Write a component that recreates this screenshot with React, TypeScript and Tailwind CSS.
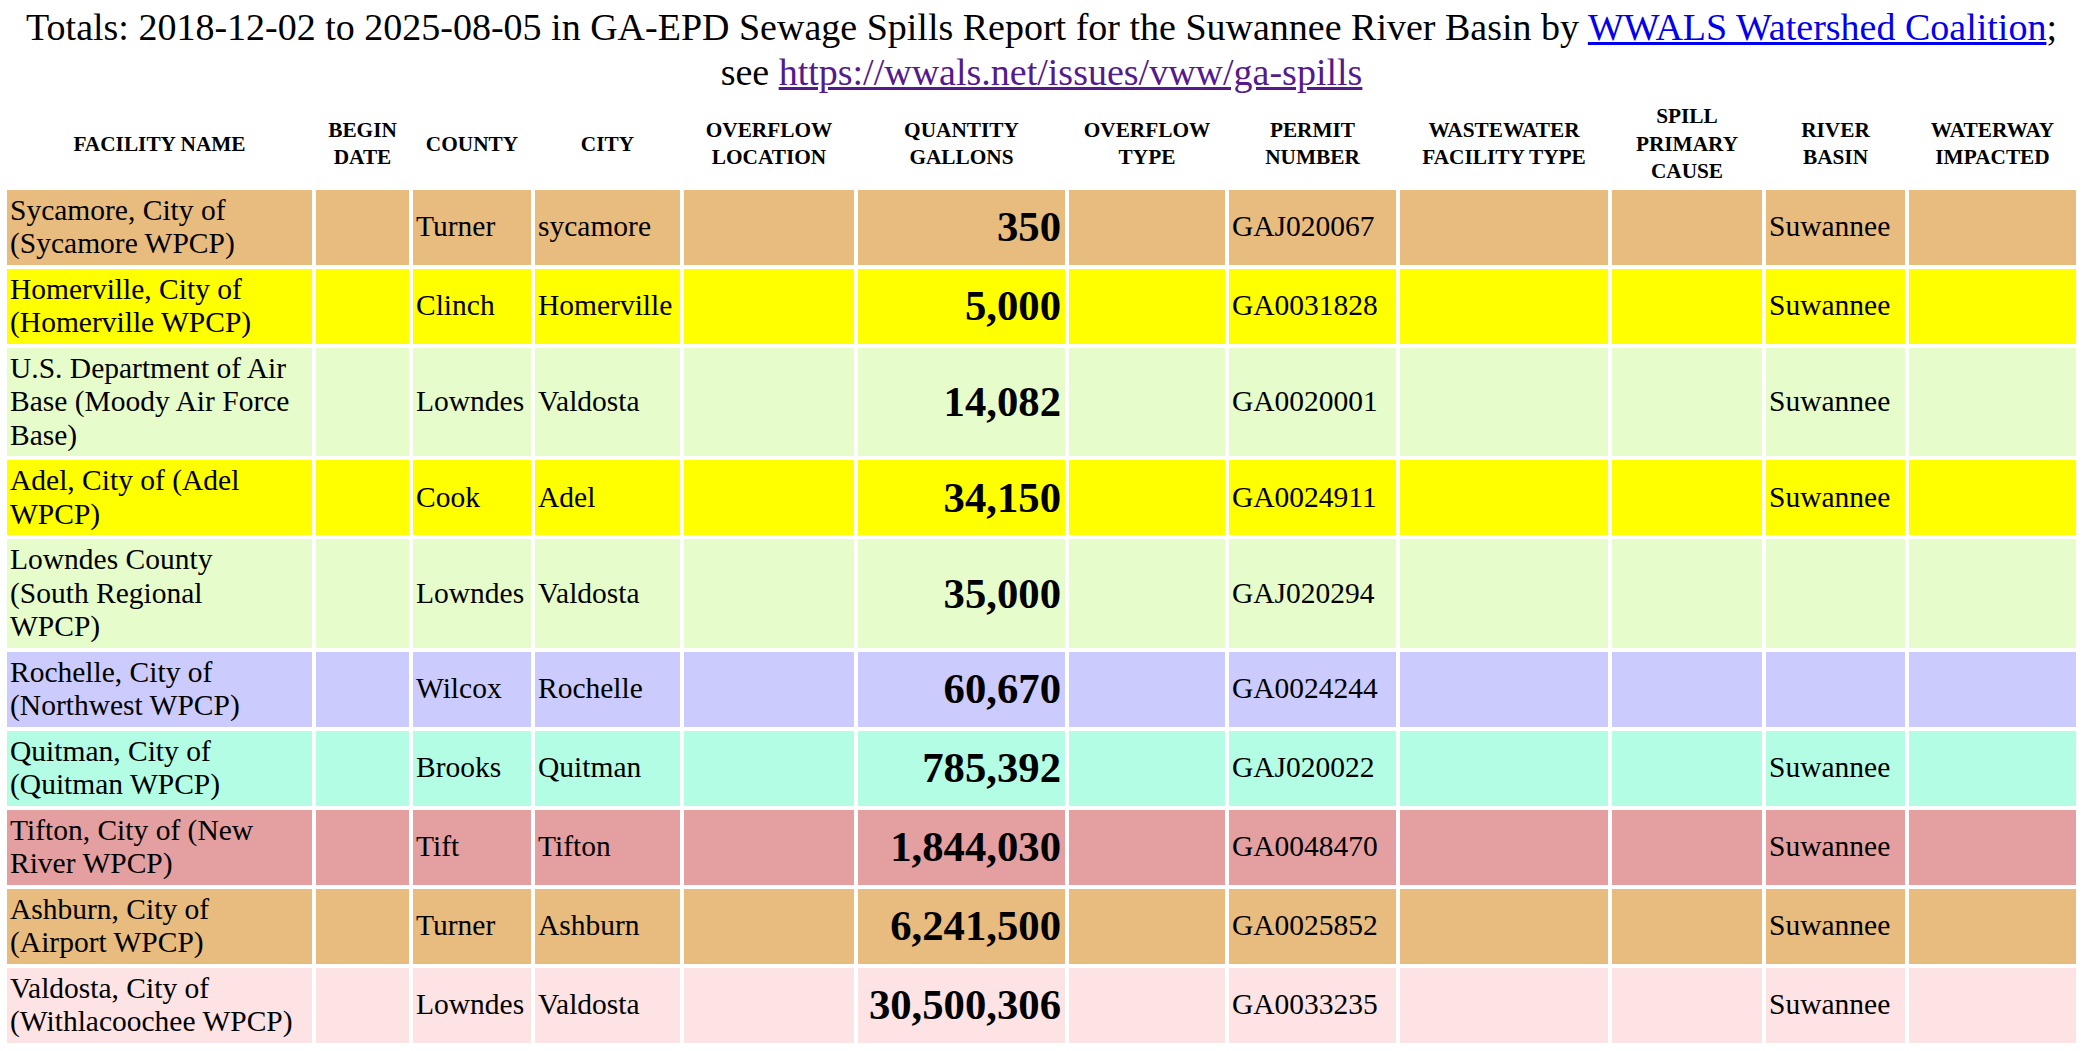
import React from "react";

const widths = [305, 93, 118, 145, 170, 207, 156, 167, 208, 150, 139, 167];
const heads = [
  ["FACILITY NAME"],
  ["BEGIN", "DATE"],
  ["COUNTY"],
  ["CITY"],
  ["OVERFLOW", "LOCATION"],
  ["QUANTITY", "GALLONS"],
  ["OVERFLOW", "TYPE"],
  ["PERMIT", "NUMBER"],
  ["WASTEWATER", "FACILITY TYPE"],
  ["SPILL", "PRIMARY", "CAUSE"],
  ["RIVER", "BASIN"],
  ["WATERWAY", "IMPACTED"],
];

type Row = { bg: string; name: React.ReactNode; county: string; city: string; q: string; permit: string; basin: string };
const rows: Row[] = [
  { bg: "bg-[#e8bb7e]", name: "Sycamore, City of (Sycamore WPCP)", county: "Turner", city: "sycamore", q: "350", permit: "GAJ020067", basin: "Suwannee" },
  { bg: "bg-[#ffff00]", name: "Homerville, City of (Homerville WPCP)", county: "Clinch", city: "Homerville", q: "5,000", permit: "GA0031828", basin: "Suwannee" },
  { bg: "bg-[#e6fdcb]", name: "U.S. Department of Air Base (Moody Air Force Base)", county: "Lowndes", city: "Valdosta", q: "14,082", permit: "GA0020001", basin: "Suwannee" },
  { bg: "bg-[#ffff00]", name: "Adel, City of (Adel WPCP)", county: "Cook", city: "Adel", q: "34,150", permit: "GA0024911", basin: "Suwannee" },
  { bg: "bg-[#e6fdcb]", name: <>Lowndes County<br />(South Regional<br />WPCP)</>, county: "Lowndes", city: "Valdosta", q: "35,000", permit: "GAJ020294", basin: "" },
  { bg: "bg-[#cccbfd]", name: "Rochelle, City of (Northwest WPCP)", county: "Wilcox", city: "Rochelle", q: "60,670", permit: "GA0024244", basin: "" },
  { bg: "bg-[#b2fde3]", name: "Quitman, City of (Quitman WPCP)", county: "Brooks", city: "Quitman", q: "785,392", permit: "GAJ020022", basin: "Suwannee" },
  { bg: "bg-[#e49fa1]", name: "Tifton, City of (New River WPCP)", county: "Tift", city: "Tifton", q: "1,844,030", permit: "GA0048470", basin: "Suwannee" },
  { bg: "bg-[#e8bb7e]", name: "Ashburn, City of (Airport WPCP)", county: "Turner", city: "Ashburn", q: "6,241,500", permit: "GA0025852", basin: "Suwannee" },
  { bg: "bg-[#fde3e3]", name: "Valdosta, City of (Withlacoochee WPCP)", county: "Lowndes", city: "Valdosta", q: "30,500,306", permit: "GA0033235", basin: "Suwannee" },
];

export default function App() {
  const td = "px-[3px] py-[4px] align-middle";
  return (
    <div className="bg-white text-black min-h-[1051px]" style={{ fontFamily: '"Liberation Serif", "Times New Roman", serif' }}>
      <div className="text-center text-[38px] leading-[45px] pt-[5px]">
        Totals: 2018-12-02 to 2025-08-05 in GA-EPD Sewage Spills Report for the Suwannee River Basin by{" "}
        <a href="#" className="text-[#0000ee] underline">WWALS Watershed Coalition</a>;<br />
        see <a href="#" className="text-[#551a8b] underline">https://wwals.net/issues/vww/ga-spills</a>
      </div>
      <table className="table-fixed border-separate border-spacing-[4px] ml-[3px] mt-[4px]" style={{ width: widths.reduce((a, b) => a + b, 0) + 4 * 13 }}>
        <colgroup>
          {widths.map((w, i) => (
            <col key={i} style={{ width: w }} />
          ))}
        </colgroup>
        <thead>
          <tr>
            {heads.map((h, i) => (
              <th key={i} className="text-[21.3px] leading-[27.5px] font-bold text-center align-middle px-0 py-0">
                {h.map((l, j) => (
                  <div key={j}>{l}</div>
                ))}
              </th>
            ))}
          </tr>
        </thead>
        <tbody className="text-[29.5px] leading-[33.5px]">
          {rows.map((r, i) => (
            <tr key={i}>
              <td className={`${td} ${r.bg}`}>{r.name}</td>
              <td className={`${td} ${r.bg}`}></td>
              <td className={`${td} ${r.bg}`}>{r.county}</td>
              <td className={`${td} ${r.bg}`}>{r.city}</td>
              <td className={`${td} ${r.bg}`}></td>
              <td className={`${td} ${r.bg} text-right font-bold text-[42.7px] pr-[4px]`}>{r.q}</td>
              <td className={`${td} ${r.bg}`}></td>
              <td className={`${td} ${r.bg}`}>{r.permit}</td>
              <td className={`${td} ${r.bg}`}></td>
              <td className={`${td} ${r.bg}`}></td>
              <td className={`${td} ${r.bg}`}>{r.basin}</td>
              <td className={`${td} ${r.bg}`}></td>
            </tr>
          ))}
        </tbody>
      </table>
    </div>
  );
}
